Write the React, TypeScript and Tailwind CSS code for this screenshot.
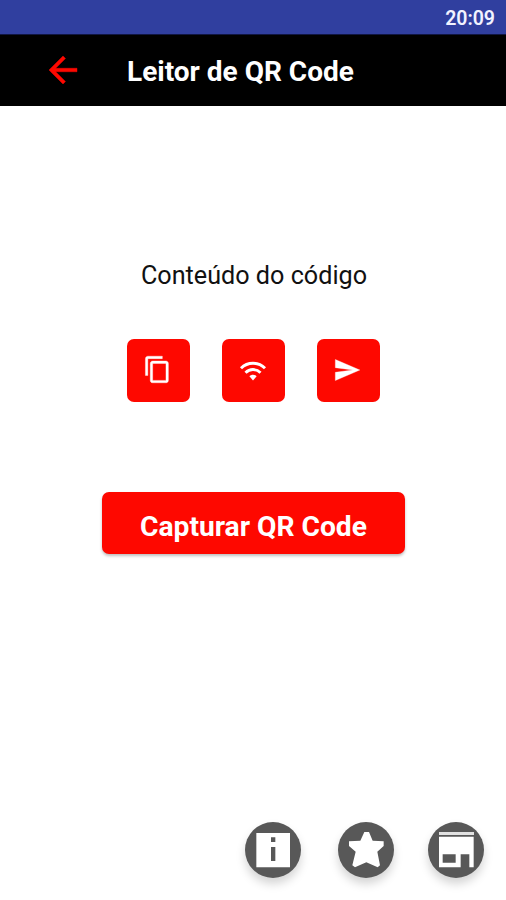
import type { ReactNode } from "react";

function ActionButton({ label, children }: { label: string; children: ReactNode }) {
  return (
    <button
      type="button"
      aria-label={label}
      className="flex h-[63px] w-[63px] items-center justify-center rounded-[7px] bg-[#fe0800] text-white"
    >
      {children}
    </button>
  );
}

function RoundButton({ label, children }: { label: string; children: ReactNode }) {
  return (
    <button
      type="button"
      aria-label={label}
      className="h-14 w-14 rounded-full bg-[#585858] text-white shadow-[0_6px_10px_rgba(0,0,0,0.17)]"
    >
      <svg viewBox="0 0 168 168" className="h-14 w-14" fill="currentColor">
        {children}
      </svg>
    </button>
  );
}

export default function App() {
  return (
    <div className="flex h-[900px] w-[506px] flex-col overflow-hidden bg-white font-['Roboto',sans-serif]">
      <div className="flex h-[34px] shrink-0 items-center justify-end bg-[#303f9f] pt-[3px] pr-[11px] text-[19.5px] font-semibold text-[#f1f2ff]">
        20:09
      </div>

      <header className="flex h-[72px] shrink-0 items-center border-t border-[#101642] bg-black pl-[42px]">
        <button type="button" aria-label="Voltar" className="-mt-px text-[#fe0800]">
          <svg viewBox="0 0 24 24" className="h-[42px] w-[42px]" fill="currentColor" stroke="currentColor" strokeWidth="0.25">
            <path d="M20 11H7.83l5.59-5.59L12 4l-8 8 8 8 1.41-1.41L7.83 13H20v-2z" />
          </svg>
        </button>
        <h1 className="mt-[2px] ml-[43px] text-[28px] leading-8 font-bold whitespace-nowrap text-white">Leitor de QR Code</h1>
      </header>

      <main className="flex flex-1 flex-col items-center">
        <p className="mt-[154px] ml-[2px] text-[25.2px] leading-8 whitespace-nowrap text-[#111]">Conteúdo do código</p>

        <div className="mt-[47px] flex gap-8">
          <ActionButton label="Copiar">
            <svg viewBox="0 0 24 24" className="mr-px mb-[2px] h-[29px] w-[29px]" fill="currentColor" stroke="currentColor" strokeWidth="0.3">
              <path d="M16 1H4c-1.1 0-2 .9-2 2v14h2V3h12V1zm3 4H8c-1.1 0-2 .9-2 2v14c0 1.1.9 2 2 2h11c1.1 0 2-.9 2-2V7c0-1.1-.9-2-2-2zm0 16H8V7h11v14z" />
            </svg>
          </ActionButton>
          <ActionButton label="Wi-Fi">
            <svg viewBox="0 0 28 22" className="mr-px h-[22px] w-[28px]" fill="none" stroke="currentColor" strokeWidth="2.9">
              <path d="M2 8.2C8.6 1.5 19.4 1.5 26 8.2M6.5 12.7c4.2-4.2 10.8-4.2 15 0" />
              <path fill="currentColor" stroke="none" d="M10.4 16.2c2-2 5.2-2 7.2 0L14 20.6z" />
            </svg>
          </ActionButton>
          <ActionButton label="Enviar">
            <svg viewBox="0 0 24 24" className="mr-[3px] mb-[2px] h-[28px] w-[28px]" fill="currentColor" stroke="currentColor" strokeWidth="0.3">
              <path d="M2.01 21L23 12 2.01 3 2 10l15 2-15 2z" />
            </svg>
          </ActionButton>
        </div>

        <button
          type="button"
          className="mt-[90px] ml-px flex h-[62px] w-[303px] items-center justify-center rounded-[7px] bg-[#fe0800] pt-[9px] text-[28.2px] font-bold whitespace-nowrap text-white shadow-[0_2px_3px_rgba(0,0,0,0.25)]"
        >
          Capturar QR Code
        </button>
      </main>

      <footer className="flex h-[78px] shrink-0 items-start justify-end pr-[22px]">
        <RoundButton label="Informações">
          <path d="M34 33h101v103H34z" />
          <path fill="#585858" d="M78 46h13v14H78zM78 75h13v42H78z" />
        </RoundButton>
        <div className="ml-[37px] flex">
          <RoundButton label="Avaliar">
            <path d="M79 30h14l11 26 33 2v14l-19 17 8 41-7 6-34-15-34 15-8-6 10-41-20-17V58l34-2z" />
          </RoundButton>
        </div>
        <div className="ml-[34px] flex">
          <RoundButton label="Loja">
            <path fill="#e2e2e2" d="M33 30h105v9H33z" />
            <path fillRule="evenodd" d="M33 44h104v92h-13V97H98v39H33zM44 97v25h39V97z" />
          </RoundButton>
        </div>
      </footer>
    </div>
  );
}
